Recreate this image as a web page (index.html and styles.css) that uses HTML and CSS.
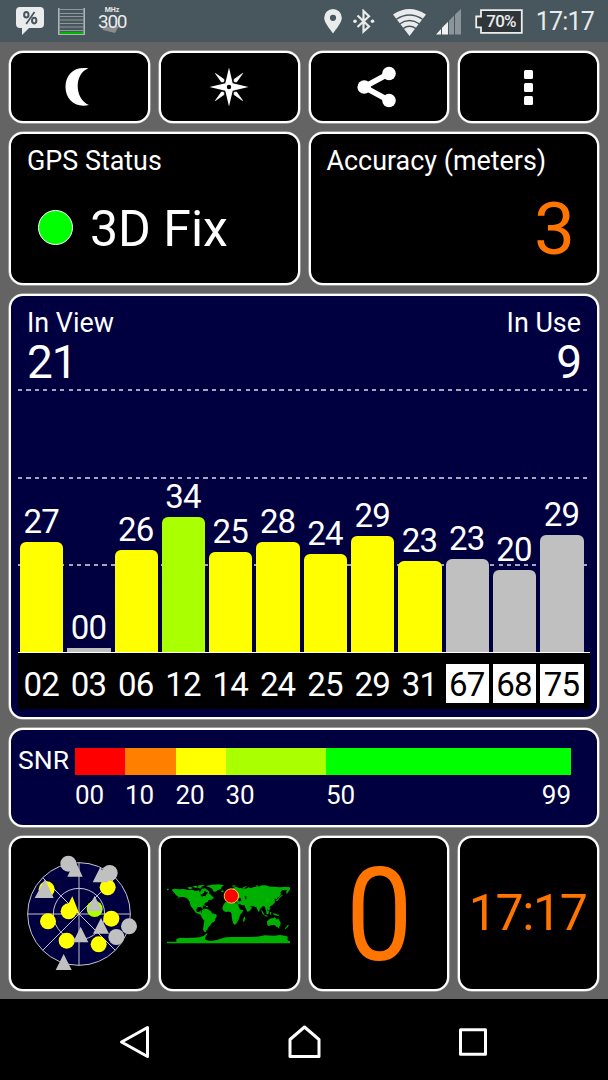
FILE: index.html
```html
<!DOCTYPE html>
<html lang="en">
<head>
    <meta charset="UTF-8">
    <meta name="viewport" content="width=device-width, initial-scale=1.0">
    <title>GPS Status</title>
    <link rel="stylesheet" href="styles.css">
</head>
<body>
    <header class="status-bar">
        <div class="status-left">
            <svg class="icon-percent" viewBox="0 0 28 28" width="28" height="28">
                <path fill="#e9ebec" d="M4 0h20q4 0 4 4v13q0 4-4 4H13l-7 7v-7H4q-4 0-4-4V4q0-4 4-4z"/>
                <g fill="none" stroke="#48565d" stroke-width="2">
                    <ellipse cx="10.3" cy="7.8" rx="2.2" ry="2.8"/>
                    <ellipse cx="18.2" cy="13.6" rx="2.2" ry="2.8"/>
                    <path d="M18.5 5l-8.3 12" stroke-width="1.7"/>
                </g>
            </svg>
            <svg class="icon-meter" viewBox="0 0 27 27" width="27" height="27">
                <path d="M.8 0v26M26.2 0v26" stroke="#aeb5b8" stroke-width="1.6"/>
                <path d="M1 1.5h25M1 5.5h25M1 8.5h25M1 12h25M1 15.5h25M1 19h25M1 22.5h25" stroke="#8e979b" stroke-width="1.2"/>
                <path d="M2 25h23" stroke="#00b400" stroke-width="2.4"/>
                <path d="M0 26.5h27" stroke="#aeb5b8"/>
            </svg>
            <div class="cpu">
                <svg viewBox="0 0 20 9" width="20" height="9"><path d="M1 2l17-1-4 7-12-3z" fill="#8b8e8f"/></svg>
                <span class="cpu-unit">MHz</span>
                <span class="cpu-value">300</span>
            </div>
        </div>
        <div class="status-right">
            <svg class="icon-pin" viewBox="0 0 18 25" width="18" height="25">
                <path fill="#e9ebec" fill-rule="evenodd" d="M9 0a8.8 8.8 0 0 1 8.8 8.8C17.8 14 12 20 9 24.5 6 20 .2 14 .2 8.8A8.8 8.8 0 0 1 9 0zm0 5.7a3.1 3.1 0 1 0 0 6.2 3.1 3.1 0 0 0 0-6.2z"/>
            </svg>
            <svg class="icon-bluetooth" viewBox="0 0 22 25" width="22" height="25">
                <path d="M4.5 6.5l11.500 11-5.500 5V2L16 7.300 4.500 18" fill="none" stroke="#e9ebec" stroke-width="2.2"/>
                <circle cx="2" cy="12.3" r="1.8" fill="#e9ebec"/>
                <circle cx="19.5" cy="12.3" r="1.8" fill="#e9ebec"/>
            </svg>
            <svg class="icon-wifi" viewBox="0 0 33 27" width="33" height="27">
                <path d="M0 5.5Q16.500-5.500 33 5.500L16.500 27z" fill="#e9ebec"/>
                <g fill="none" stroke="#48565d" stroke-width="1.5">
                    <path d="M3 10.5Q16.500 1.500 30 10.500M6.500 15Q16.500 8 26.500 15M10 19.600Q16.500 15 23 19.600"/>
                </g>
            </svg>
            <svg class="icon-signal" viewBox="0 0 26 26" width="26" height="26">
                <path d="M0 25.5L5 20v5.500zM6 18.800l6-6v12.700H6z" fill="#f1f2f2"/>
                <path d="M13 11.8l5-5.300v19h-5zM19 5.500L25 0v25.500h-6z" fill="#8b9498"/>
            </svg>
            <div class="battery">
                <svg viewBox="0 0 48 25" width="48" height="25">
                    <path d="M6 1.2h40.800v22.600H6v-5.500H1.200V7.500H6z" fill="#30353a" stroke="#eceeee" stroke-width="1.8"/>
                </svg>
                <span>70%</span>
            </div>
            <span class="clock">17:17</span>
        </div>
    </header>

    <main class="dashboard">
        <div class="row toolbar">
            <button class="card" aria-label="Night mode">
                <svg class="icon-moon" viewBox="0 0 24 38" width="24" height="38">
                    <path d="M23.500 .5C9 5 9 31 24 37 10 40.500 .5 31 .5 19 .5 6 10-2 23.500 .5z" fill="#fff"/>
                </svg>
            </button>
            <button class="card" aria-label="Compass">
                <svg viewBox="0 0 40 40" width="40" height="40">
                    <path d="M20 .5l3.700 15.800L39.500 20l-15.800 3.700L20 39.500l-3.700-15.800L.5 20l15.800-3.700z" fill="#fff"/>
                    <path d="M6.500 6.500l8.500 6-.3 2.200-2.200.3zM33.500 6.500l-8.500 6 .3 2.200 2.200.3zM6.500 33.500l8.500-6-.3-2.200-2.200-.3zM33.500 33.500l-8.500-6 .3-2.200 2.200-.3z" fill="#fff" stroke="#fff" stroke-width=".8"/>
                    <circle cx="20" cy="20" r="2.2"/>
                </svg>
            </button>
            <button class="card" aria-label="Share">
                <svg class="icon-share" viewBox="0 0 40 42" width="40" height="42">
                    <path d="M32 7.5L7 21l25 13.500" fill="none" stroke="#fff" stroke-width="5.5"/>
                    <g fill="#fff">
                        <circle cx="32" cy="7.5" r="6.800"/>
                        <circle cx="7.2" cy="21" r="6.800"/>
                        <circle cx="32" cy="34.5" r="6.800"/>
                    </g>
                </svg>
            </button>
            <button class="card" aria-label="More options">
                <span class="dots"><i></i><i></i><i></i></span>
            </button>
        </div>

        <div class="row">
            <section class="card fix-card">
                <h2>GPS Status</h2>
                <div class="fix">
                    <span class="fix-light"></span>
                    <span class="fix-text">3D Fix</span>
                </div>
            </section>
            <section class="card accuracy-card">
                <h2>Accuracy (meters)</h2>
                <div class="accuracy">3</div>
            </section>
        </div>

        <section class="card blue chart-card">
            <div class="chart-head">
                <div>
                    <h2>In View</h2>
                    <div class="count">21</div>
                </div>
                <div class="in-use">
                    <h2>In Use</h2>
                    <div class="count">9</div>
                </div>
            </div>
            <div class="chart">
                <div class="grid-lines"><i></i><i></i><i></i></div>
                <div class="bars">
                    <div class="sat"><span>27</span><div class="bar" style="height: 110px"></div></div>
                    <div class="sat"><span>00</span><div class="bar unused flat" style="height: 4px"></div></div>
                    <div class="sat"><span>26</span><div class="bar" style="height: 102px"></div></div>
                    <div class="sat"><span>34</span><div class="bar good" style="height: 135px"></div></div>
                    <div class="sat"><span>25</span><div class="bar" style="height: 100px"></div></div>
                    <div class="sat"><span>28</span><div class="bar" style="height: 110px"></div></div>
                    <div class="sat"><span>24</span><div class="bar" style="height: 98px"></div></div>
                    <div class="sat"><span>29</span><div class="bar" style="height: 116px"></div></div>
                    <div class="sat"><span>23</span><div class="bar" style="height: 91px"></div></div>
                    <div class="sat"><span>23</span><div class="bar unused" style="height: 93px"></div></div>
                    <div class="sat"><span>20</span><div class="bar unused" style="height: 82px"></div></div>
                    <div class="sat"><span>29</span><div class="bar unused" style="height: 117px"></div></div>
                </div>
            </div>
            <div class="sat-ids">
                <span>02</span>
                <span>03</span>
                <span>06</span>
                <span>12</span>
                <span>14</span>
                <span>24</span>
                <span>25</span>
                <span>29</span>
                <span>31</span>
                <span class="glonass">67</span>
                <span class="glonass">68</span>
                <span class="glonass">75</span>
            </div>
        </section>

        <section class="card blue snr-card">
            <span class="snr-label">SNR</span>
            <div class="snr-scale">
                <div class="step red">00</div>
                <div class="step orange">10</div>
                <div class="step yellow">20</div>
                <div class="step lime">30</div>
                <div class="step green"><span>50</span><span>99</span></div>
            </div>
        </section>

        <div class="row widgets">
            <section class="card">
                <svg class="radar" viewBox="36 55 342 360" width="114" height="120">
                    <circle cx="207" cy="235" r="154" fill="#000040" stroke="#c4c4d0" stroke-width="3"/>
                    <g fill="none" stroke="#c4c4d0" stroke-width="3">
                        <circle cx="207" cy="235" r="77"/>
                        <path d="M207 81v308M53 235h308M98 126l218 218M316 126L98 344"/>
                    </g>
                    <g fill="#ff0">
                        <circle cx="110" cy="161" r="24"/>
                        <circle cx="293" cy="155" r="24"/>
                        <circle cx="114" cy="257" r="24"/>
                        <circle cx="176" cy="227" r="24"/>
                        <path d="M187 182l20 50h-46z"/>
                        <circle cx="304" cy="249" r="24"/>
                        <circle cx="170" cy="315" r="24"/>
                        <circle cx="266" cy="326" r="24"/>
                    </g>
                    <circle cx="254" cy="220" r="24" fill="#af0"/>
                    <g fill="#c0c0c0">
                        <circle cx="175" cy="84" r="24"/>
                        <circle cx="299" cy="112" r="24"/>
                        <circle cx="357" cy="272" r="24"/>
                        <circle cx="319" cy="304" r="24"/>
                        <path d="M195 74l23 49h-46zM271 94l24 46h-47zM105 131l26 56H74zM254 180l22 46h-45zM273 247l24 47h-48zM212 273l23 47h-46zM161 355l24 48h-48z"/>
                    </g>
                </svg>
            </section>
            <section class="card">
                <svg class="world" viewBox="30 138 384 195" width="128" height="65">
                    <g fill="#00b000">
                        <path d="M50 164l8-3 14 2 14-1 14 3 14 0 8 3 10-2 2 6 6-8 5 0 3 8-6 5 1 5 8 2 4-8 6-2 8 7 8 8-8 5-8 1-3 6-8 3-6 10-2 10-3-8-10 0-5 6 1 8 7 1 5-5 1 8 6 3 2 8 6 1-3 3-8-5-6-6-12-4-6-8-10-13-3-13-8-10-9-4-12 0-10 5 6-6-6-3z"/>
                        <path d="M36 161h5v5h-5zM96 158l10-3 8 4-8 4zM112 154l12-2 6 5-10 2zM128 152l12-2 10 1-10 4-4 6-6-3zM138 162l12-2 14 10-3 5-10-6-9-1zM142 206l10 4-2 3-10-5zM153 213l6 0v3h-6z"/>
                        <path d="M152 153l18-4 20-1 17 3-7 5-2 6-10 4-8 5-5-2-4-8-8-4z"/>
                        <path d="M140 226l8-5 10 1 9 6 4 7 9 2 6 4-4 9-3 9-9 5-4 7-6 6-3 7-5 5 3 3-8-2-3-7 2-12 2-14-7-8-4-9 3-7z"/>
                        <path d="M207 188l7-3-2-6 8-2 4-6 5 0 0-6 6-7 7-3 9 3 9 2 13 1 10-5 2 4 12-4 10 0 14-5 12 0 12 4 12 0 18 2 16-2 14 2 12 0 3 3-8 2-8 2-4 7-5 6-2-6 4-6-16 1-5 7 2 5-6 8-6 3 1 6-4-4-5 0 2 6-1 6-7 8-7 3-3 3 3 5-3 5-6-5 0 8 5 6-3-1-6-10-2-10-6-2-3 4-6 4-3 10-3-2-5-12-8-3-8-1-3 1 6 4-5 8-8 5-7-13-2-7-10-1-5-4-3 4-4-6-7-2-6 6-9 1z"/>
                        <path d="M206 208l5-6 12-2 5 3 7 1 12 1 6 14 4 6 8 0-4 8-6 7-2 9-4 8-5 9-5 3-4-3-3-10-2-10 0-8-3-7-8-1-8 1-7-5-2-8zM268 244l4 7-4 8-4 2 1-10zM213 174l4 8-4 0-2-4zM197 167l8-1 1 4-5 2z"/>
                        <path d="M336 259l7-6 6-3 6 0 2-3 6 2-1 3 5 2 2-7 3 8 5 7-1 9-5 6-6-1-6-6-9 0-8 3-5-2zM368 277h5l-2 4zM398 270l4 1-4 6-6 5-3-1z"/>
                        <path d="M318 224l6 6 4 8 0 3-5-4zM328 240l10 2v3l-9-2zM334 228l5-2 4 4-4 8-5-2zM345 231l4 0-1 7-3 3zM353 235l9 1 8 3 4 5-8-2-9-2zM340 208l3 4 4 10-4-2zM378 181l6-1-8 7-4 5-5 6-5 0 7-7z"/>
                        <path d="M228 154l8-3 8 1-6 3zM262 159l6-4 9-2-5 4-5 4zM300 153l8-2 4 3-6 2zM350 156l8-1 1 2zM396 162h8v4h-8z"/>
                        <path d="M36 320l28 0 0-7 10-5 22 1 20-1 18-1 13-5 6-5 5-2-4 7-3 4-1 7 6 3 12 2 20-4 14-4 10-3 24-1 26 0 20 0 25-1 22-4 30 1 16-2 18 3 6 3-2 5 2 6 9 2v2h5v4H36z"/>
                    </g>
                    <g fill="#000">
                        <path d="M251 190l6-1 2 7-5 4-5-4zM269 184l5 0 0 9-3 0zM238 170l4 5-7 10-4 0zM236 196l6 2 6 4-6 0zM136 176l7 3 0 7-5-3z"/>
                        <path d="M405 138h10v195h-10z"/>
                    </g>
                    <circle cx="229" cy="183" r="21.500" fill="#f00" stroke="#fc3" stroke-width="3"/>
                </svg>
            </section>
            <section class="card speed"><span>0</span></section>
            <section class="card time"><span>17:17</span></section>
        </div>
    </main>

    <nav class="nav-bar">
        <svg viewBox="0 0 34 34" width="34" height="34">
            <path d="M29.500 2.500v29L3.500 17z" fill="none" stroke="#fff" stroke-width="3" stroke-linejoin="round"/>
        </svg>
        <svg viewBox="0 0 34 34" width="34" height="34">
            <path d="M17.500 2L32 14.500v17H3v-17z" fill="none" stroke="#fff" stroke-width="3" stroke-linejoin="round"/>
        </svg>
        <svg viewBox="0 0 34 34" width="34" height="34">
            <path d="M4.500 4.700h25v24.600h-25z" fill="none" stroke="#fff" stroke-width="3" stroke-linejoin="round"/>
        </svg>
    </nav>
</body>
</html>
```

FILE: styles.css
```css
* {
    margin: 0;
    padding: 0;
    box-sizing: border-box;
}

body {
    width: 608px;
    height: 1080px;
    background-color: #646464;
    color: #ffffff;
    font-family: Roboto, "Liberation Sans", sans-serif;
    display: flex;
    flex-direction: column;
    overflow: hidden;
}

svg {
    display: block;
    flex: none;
}

h2 {
    font-size: 26.9px;
    font-weight: 400;
    line-height: 30px;
}

/* status bar */

.status-bar {
    height: 42px;
    flex: none;
    background-color: #48565d;
    display: flex;
    justify-content: space-between;
    padding: 0 14px 0 16px;
    color: #e9ebec;
}

.status-left, .status-right {
    display: flex;
    align-items: flex-start;
}

.icon-percent {
    margin-top: 7px;
}

.icon-meter {
    margin: 8px 0 0 14px;
}

.cpu {
    position: relative;
    width: 28px;
    margin: 7px 0 0 13px;
}

.cpu svg {
    position: absolute;
    left: 3px;
    top: 18px;
}

.cpu span {
    position: relative;
    display: block;
    text-align: center;
}

.cpu-unit {
    font-size: 7px;
    font-weight: 700;
    line-height: 6px;
}

.cpu-value {
    font-size: 19px;
    line-height: 18px;
    letter-spacing: -1.3px;
}

.icon-pin {
    margin: 9px 11px 0 0;
}

.icon-bluetooth {
    margin: 9px 18px 0 0;
}

.icon-wifi {
    margin: 9px 10px 0 0;
}

.icon-signal {
    margin: 9px 13px 0 0;
}

.battery {
    position: relative;
    margin: 9px 11px 0 0;
}

.battery span {
    position: absolute;
    left: 6px;
    top: 0;
    width: 40px;
    text-align: center;
    font-size: 17px;
    font-weight: 500;
    line-height: 25px;
    letter-spacing: -0.8px;
}

.clock {
    font-size: 25px;
    line-height: 44px;
    letter-spacing: -0.8px;
    width: 60px;
    text-align: right;
}

/* cards */

.dashboard {
    height: 957px;
    flex: none;
    padding: 9px;
    display: grid;
    grid-template-rows: 72px 153px 425px 99px 155px;
    gap: 9px;
}

.row {
    display: flex;
    gap: 9px;
}

.card {
    flex: 1;
    min-width: 0;
    background-color: #000000;
    color: #ffffff;
    border: 2px solid #ffffff;
    border-radius: 14px;
    box-shadow: 0 0 0 0.5px #d0d0d0;
    font-family: inherit;
}

.blue {
    background-color: #000040;
}

.toolbar .card, .widgets .card {
    display: flex;
    align-items: center;
    justify-content: center;
}

.icon-moon, .icon-share {
    margin-right: 4px;
}

.dots {
    display: flex;
    flex-direction: column;
    gap: 4px;
}

.dots i {
    width: 9px;
    height: 9px;
    border-radius: 1.5px;
    background-color: #ffffff;
}

.fix-card, .accuracy-card {
    padding: 12px 16px;
}

.fix {
    display: flex;
    align-items: center;
    padding-left: 11px;
    margin-top: 25px;
}

.fix-light {
    width: 35px;
    height: 35px;
    border: 1.5px solid #ffffff;
    border-radius: 50%;
    background-color: #00ff00;
    margin: 0 17px 4px 0;
}

.fix-text {
    font-size: 50px;
    line-height: 56px;
}

.accuracy {
    font-size: 73px;
    line-height: 80px;
    margin: 13px 6px 0 0;
    text-align: right;
    color: #ff7500;
}

/* satellites */

.chart-card {
    display: flex;
    flex-direction: column;
    padding: 12px 7px 7px;
}

.chart-head {
    display: flex;
    justify-content: space-between;
    padding: 0 9px;
    height: 81px;
}

.in-use {
    text-align: right;
}

.count {
    font-size: 46px;
    line-height: 48px;
    letter-spacing: -1px;
}

.chart {
    position: relative;
    height: 263px;
    padding-left: 2px;
}

.grid-lines i {
    position: absolute;
    left: 0;
    right: 2px;
    top: 0;
    height: 1.5px;
    background: repeating-linear-gradient(90deg, #a6a6c0 0 4.2px, transparent 4.2px 8.43px);
}

.grid-lines i:nth-child(2) {
    top: 88px;
}

.grid-lines i:nth-child(3) {
    top: 175px;
}

.bars, .sat-ids {
    display: grid;
    grid-template-columns: repeat(12, 43.3px);
    column-gap: 4px;
}

.bars {
    position: relative;
    height: 100%;
}

.sat {
    display: flex;
    flex-direction: column;
    justify-content: flex-end;
    text-align: center;
}

.sat span {
    font-size: 33px;
    line-height: 40px;
    letter-spacing: -0.8px;
    padding-right: 1px;
}

.bar {
    background-color: #ffff00;
    border-radius: 6px 6px 0 0;
}

.good {
    background-color: #aaff00;
}

.unused {
    background-color: #c0c0c0;
}

.flat {
    border-radius: 0;
}

.sat-ids {
    height: 57px;
    border-top: 1px solid #ffffff;
    background-color: #000000;
    padding: 11px 0 6px 2px;
    text-align: center;
    font-size: 33px;
    line-height: 42px;
    letter-spacing: -0.8px;
}

.sat-ids span {
    height: 39px;
    padding-right: 1px;
}

.glonass {
    background-color: #ffffff;
    color: #000000;
}

/* snr legend */

.snr-card {
    display: flex;
    align-items: flex-start;
    padding: 18px 26px 0 7px;
    font-size: 26px;
}

.snr-label {
    width: 57px;
    font-size: 26.5px;
    line-height: 23px;
}

.snr-scale {
    flex: 1;
    display: grid;
    grid-template-columns: 50px 50.5px 50px 100.5px 1fr;
}

.step {
    padding-top: 32px;
    line-height: 30px;
    background-repeat: no-repeat;
    background-size: 100% 27px;
}

.red {
    background-image: linear-gradient(#ff0000, #ff0000);
}

.orange {
    background-image: linear-gradient(#ff8000, #ff8000);
}

.yellow {
    background-image: linear-gradient(#ffff00, #ffff00);
}

.lime {
    background-image: linear-gradient(#aaff00, #aaff00);
}

.green {
    display: flex;
    justify-content: space-between;
    background-image: linear-gradient(#00ff00, #00ff00);
}

/* bottom widgets */

.radar {
    overflow: visible;
}

.speed {
    font-size: 129px;
    line-height: 150px;
    color: #ff7500;
}

.speed span {
    transform: scaleX(0.92);
    margin: 4px 0 0 1px;
}

.time {
    font-size: 50px;
    letter-spacing: -1.4px;
    color: #ff7500;
}

.time span {
    margin: 0 2px 1px 0;
}

/* navigation */

.nav-bar {
    flex: 1;
    background-color: #000000;
    display: flex;
    align-items: center;
    justify-content: center;
    gap: 135px;
    padding-top: 5px;
}
```
